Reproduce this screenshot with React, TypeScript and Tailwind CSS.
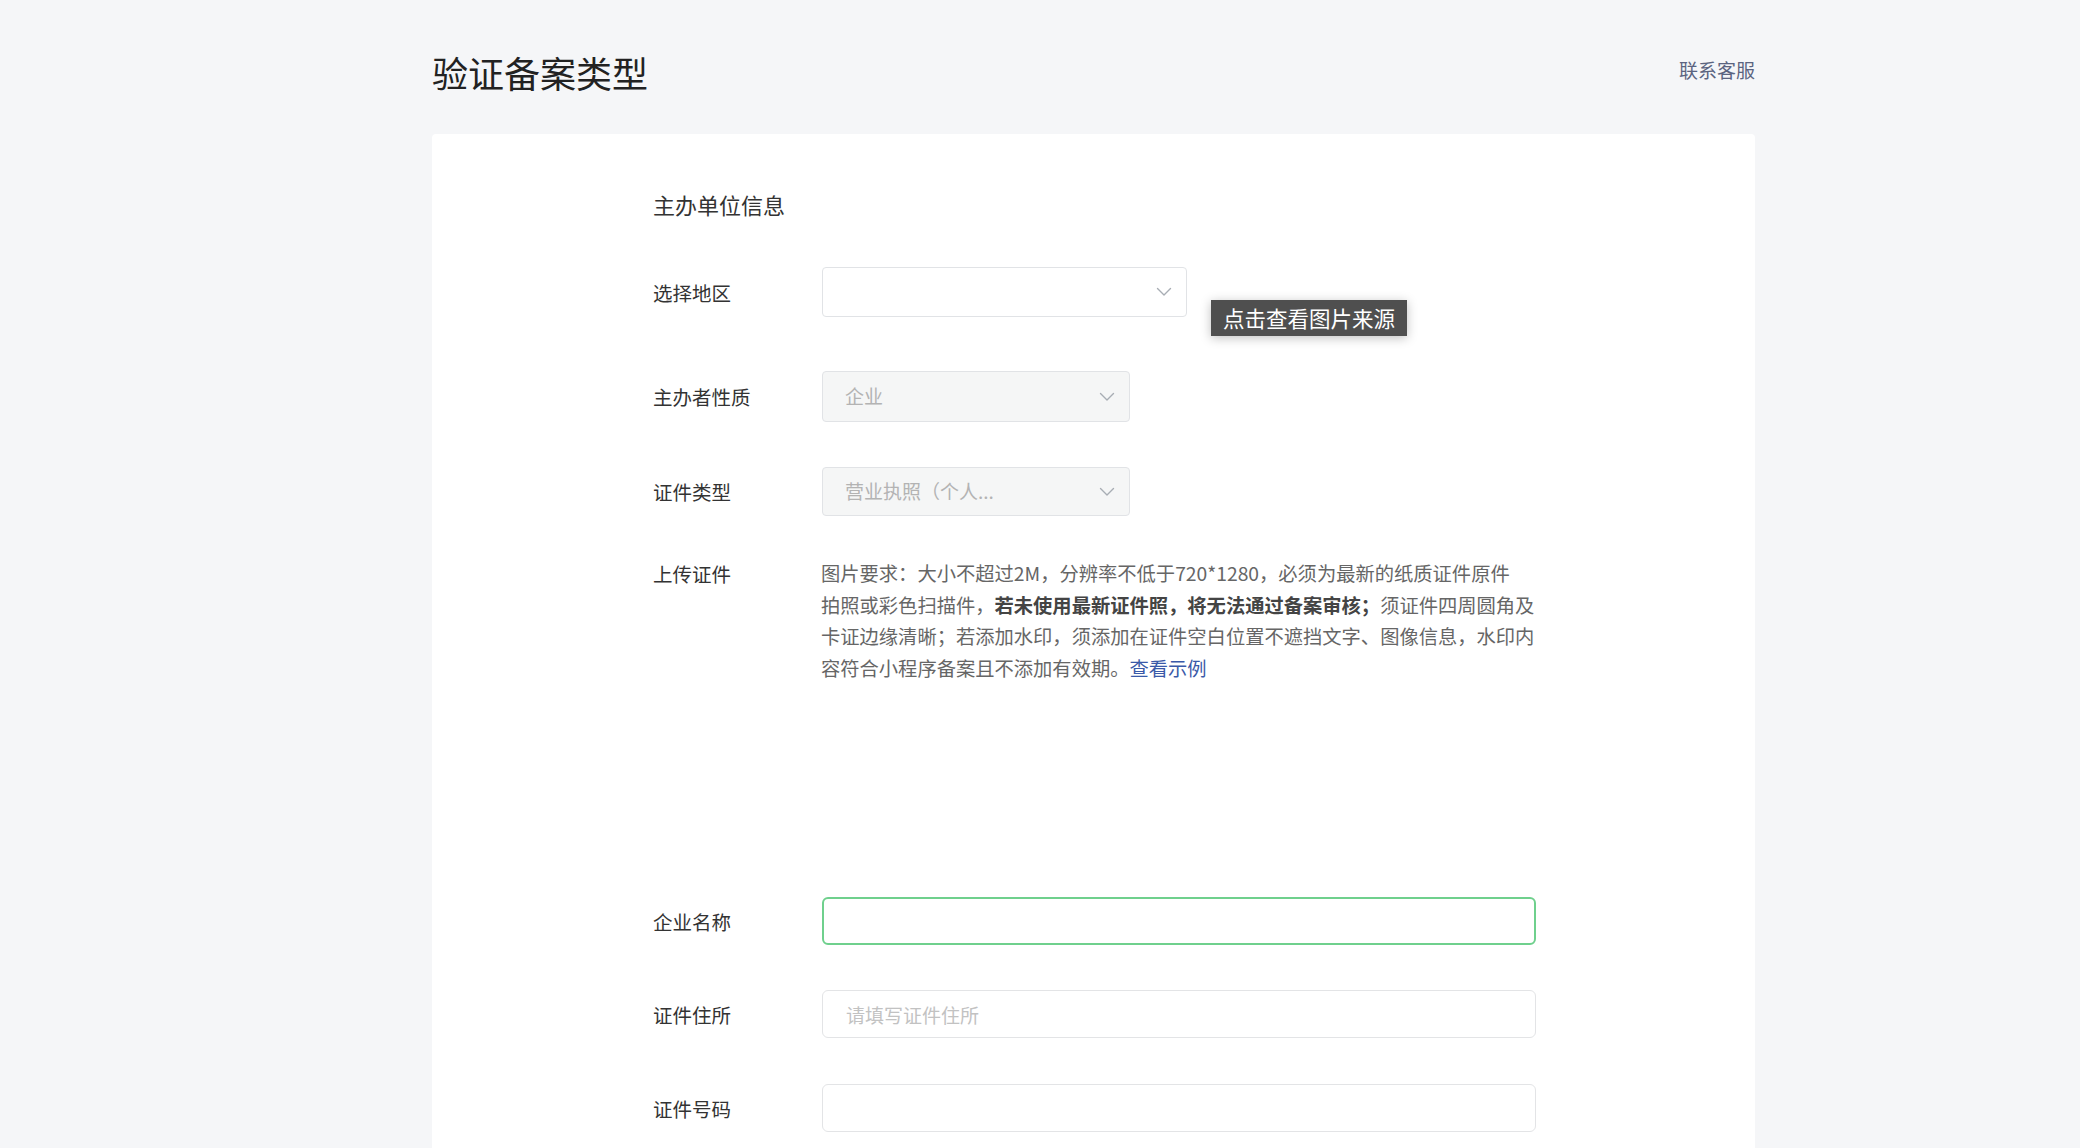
import React from "react";

const FONT = { fontFamily: '"Noto Sans CJK SC", "Noto Sans", sans-serif' };

function Chevron() {
  return (
    <svg width="16" height="10" viewBox="0 0 16 10" className="shrink-0">
      <path d="M1.5 1.5 L8 8 L14.5 1.5" fill="none" stroke="#a8adb4" strokeWidth="1.4" strokeLinecap="round" strokeLinejoin="round" />
    </svg>
  );
}

/** 下拉框 */
function Select({ value, width, disabled }: { value?: string; width: string; disabled?: boolean }) {
  return (
    <div
      className={`${width} h-full flex items-center justify-between pl-[22px] pr-[14px] rounded-[4px] border border-[#e1e3e6] ${
        disabled ? "bg-[#f5f6f6]" : "bg-white"
      }`}
    >
      <span className="text-[19px] text-[#b3b3b3] whitespace-nowrap">{value}</span>
      <Chevron />
    </div>
  );
}

function Label({ children }: { children: React.ReactNode }) {
  return <div className="w-[169px] shrink-0 text-[19.5px] text-[#333] leading-[31px]">{children}</div>;
}

export default function App() {
  return (
    <div className="min-h-[1148px] bg-[#f5f6f8] overflow-hidden" style={FONT}>
      <div className="ml-[432px] w-[1323px] pt-[49px]">
        {/* 头部 */}
        <div className="h-[46px] flex items-center justify-between">
          <h1 className="text-[36px] text-[#222] leading-none">验证备案类型</h1>
          <a className="text-[19px] text-[#5b6480] leading-none -mt-[5px]">联系客服</a>
        </div>

        {/* 表单卡片 */}
        <div className="mt-[39px] bg-white rounded-[4px] pt-[57px] pl-[221px] pb-[40px]">
          <div className="text-[22px] text-[#333] leading-[30px] -mt-[2px]">主办单位信息</div>

          <div className="relative mt-[48px] h-[50px] flex items-center">
            <Label>选择地区</Label>
            <Select width="w-[365px]" />
            <div className="absolute left-[558px] top-[33px] h-[36px] px-[12px] flex items-center bg-[#4f4f4f] text-white text-[21.5px] shadow-[0_2px_10px_rgba(0,0,0,0.25)] whitespace-nowrap">
              点击查看图片来源
            </div>
          </div>

          <div className="mt-[54px] h-[51px] flex items-center">
            <Label>主办者性质</Label>
            <Select width="w-[308px]" value="企业" disabled />
          </div>

          <div className="mt-[45px] h-[49px] flex items-center">
            <Label>证件类型</Label>
            <Select width="w-[308px]" value="营业执照（个人..." disabled />
          </div>

          <div className="mt-[42px] flex items-start">
            <Label>上传证件</Label>
            <div className="text-[19.3px] leading-[31.5px] text-[#666] whitespace-nowrap -ml-[1px]">
              图片要求：大小不超过2M，分辨率不低于720*1280，必须为最新的纸质证件原件
              <br />
              拍照或彩色扫描件，<span className="font-bold text-[#444]">若未使用最新证件照，将无法通过备案审核；</span>须证件四周圆角及
              <br />
              卡证边缘清晰；若添加水印，须添加在证件空白位置不遮挡文字、图像信息，水印内
              <br />
              容符合小程序备案且不添加有效期。<a className="text-[#3a59a8]">查看示例</a>
            </div>
          </div>

          <div className="h-[213px]" />

          <div className="h-[48px] flex items-center">
            <Label>企业名称</Label>
            <input className="w-[714px] h-full rounded-[6px] border-2 border-[#6fd08d] px-[22px] text-[19px] outline-none" />
          </div>

          <div className="mt-[45px] h-[48px] flex items-center">
            <Label>证件住所</Label>
            <input
              placeholder="请填写证件住所"
              className="w-[714px] h-full rounded-[6px] border border-[#e3e4e6] px-[23px] text-[19px] outline-none placeholder:text-[#c2c2c2]"
            />
          </div>

          <div className="mt-[46px] h-[48px] flex items-center">
            <Label>证件号码</Label>
            <input className="w-[714px] h-full rounded-[6px] border border-[#e3e4e6] px-[23px] text-[19px] outline-none" />
          </div>
        </div>
      </div>
    </div>
  );
}
